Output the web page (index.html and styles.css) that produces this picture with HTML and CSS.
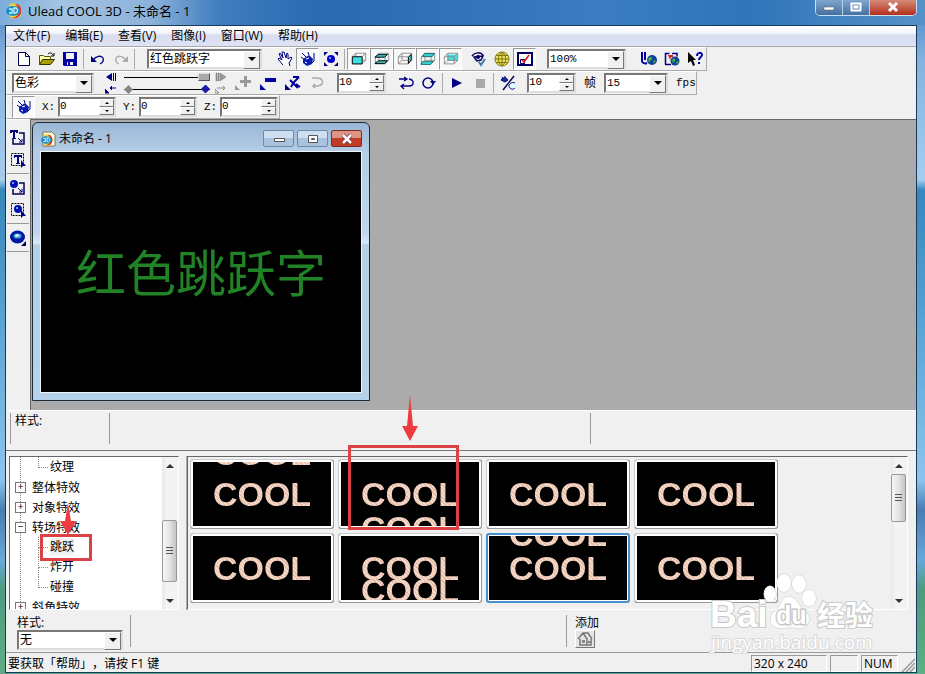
FILE: index.html
```html
<!DOCTYPE html>
<html lang="zh-CN">
<head>
  <meta charset="UTF-8" />
  <meta name="viewport" content="width=device-width, initial-scale=1.0" />
  <title>Ulead COOL 3D - 未命名 - 1</title>
  <link rel="stylesheet" href="styles.css">
</head>
<body>
  <svg class="defs" aria-hidden="true">
    <symbol id="logo" viewBox="0 0 16 16">
      <path d="M3 2l4-2 6 2 3 6-2 6-6 2-5-3z" fill="#f3d23c"/>
      <path d="M9 1c5 0 7 4 6 9-1 4-5 6-9 5 5-1 7-4 7-7s-2-5-4-7z" fill="#d8392b"/>
      <ellipse cx="7" cy="8" rx="7" ry="5" fill="#1c8fcb"/>
      <path d="M3 6h3v4H3M8 5v5h2c2-1 2-4 0-5z" fill="none" stroke="#c8f2fb" stroke-width="1.3"/>
    </symbol>
    <symbol id="pot" viewBox="0 0 16 16">
      <path d="M2 2l4 4M1 6l4 3M8 1l1 3M14 2v8l-2 2" fill="none" stroke="#000080"/>
      <path d="M3 8l6-4 4 4-1 5-5 2-4-3z" fill="#0a1fb0"/>
      <path d="M6 8l3-1M5 11l2 1" stroke="#fff"/>
    </symbol>
    <symbol id="cube" viewBox="0 0 18 16">
      <path d="M1.500 5.500l4-4h11v8l-4 4h-11zM1.500 5.500h11v8M12.500 5.500l4-4M5.500 1.500v8h11M5.500 9.500l-4 4" fill="none" stroke="#888"/>
    </symbol>
    <symbol id="corner" viewBox="0 0 16 16">
      <path d="M9 3h5v11H3V9" fill="none" stroke="#000050" stroke-width="1.500"/>
      <path d="M8 8l4 4M12 9v3H9" fill="none" stroke="#000080"/>
    </symbol>
    <symbol id="dashbox" viewBox="0 0 16 16">
      <path d="M1.500 1.500h12v12h-12z" fill="none" stroke="#000" stroke-dasharray="2 1"/>
      <path d="M11 8v8l2-2h3z" fill="#000080"/>
    </symbol>
  </svg>

  <header class="titlebar">
    <svg class="icon"><use href="#logo"/></svg>
    <h1>Ulead COOL 3D - 未命名 - 1</h1>
    <div class="window-buttons">
      <button aria-label="最小化"><svg class="icon" viewBox="0 0 16 16"><path d="M3 7h10v3H3z" fill="#fff" stroke="#555" stroke-width=".5"/></svg></button>
      <button aria-label="最大化"><svg class="icon" viewBox="0 0 16 16"><path d="M3.500 3.500h9v7h-9zM6.500 6.500h3v1h-3z" fill="none" stroke="#fff" stroke-width="2"/></svg></button>
      <button class="close" aria-label="关闭"><svg class="icon" viewBox="0 0 16 16"><path d="M4 3l8 8M12 3l-8 8" stroke="#fff" stroke-width="3"/></svg></button>
    </div>
  </header>

  <div class="app">
    <nav class="menubar">
      <a href="#">文件(F)</a>
      <a href="#">编辑(E)</a>
      <a href="#">查看(V)</a>
      <a href="#">图像(I)</a>
      <a href="#">窗口(W)</a>
      <a href="#">帮助(H)</a>
    </nav>

    <!-- 标准工具栏 -->
    <div class="toolbar">
      <div class="group">
        <button class="tool" aria-label="新建"><svg class="icon" viewBox="0 0 16 16"><path d="M2.500 1.500h7l4 4v9h-11zM9.500 1.500v4h4" fill="#fff" stroke="#000050"/></svg></button>
        <button class="tool" aria-label="打开"><svg class="icon" viewBox="0 0 16 16"><path d="M.5 13.500v-9h4l1 1h6v3" fill="#ffffa0" stroke="#555500"/><path d="M.5 13.500l3-5h12l-4 5z" fill="#a8a000" stroke="#333300"/><path d="M9 3c2-2 4-1 5 1M15 2v3h-3" fill="none" stroke="#000"/></svg></button>
        <button class="tool" aria-label="保存"><svg class="icon" viewBox="0 0 16 16"><path d="M1 1h14v14H2l-1-1z" fill="#0000a0"/><path d="M4 2h8v6H4zM5 11h6v3H5z" fill="#f0f0f0"/><path d="M6 11h2v3H6z" fill="#0000a0"/></svg></button>
      </div>
      <span class="sep"></span>
      <div class="group">
        <button class="tool" aria-label="撤消"><svg class="icon" viewBox="0 0 16 16"><path d="M3 9c3-4 8-5 10-2 1 3-1 5-3 6" fill="none" stroke="#000080" stroke-width="1.300"/><path d="M1 5v6h6z" fill="#000080"/></svg></button>
        <button class="tool" aria-label="重做"><svg class="icon" viewBox="0 0 16 16"><path d="M13 9C10 5 5 4 3 7c-1 3 1 5 3 6" fill="none" stroke="#aaa" stroke-width="1.300"/><path d="M15 5v6H9z" fill="#aaa"/></svg></button>
      </div>
      <span class="sep"></span>
      <div class="combo combo-object">
        <select aria-label="对象"><option>红色跳跃字</option></select>
      </div>
      <div class="group">
        <button class="tool" aria-label="移动"><svg class="icon" viewBox="0 0 16 16"><path d="M6 14L1 8l1-1 3 2-3-6 1-1 3 5-1-6 2 0 2 6 1-5 1 1v5l3-2 1 1-3 5 1 3" fill="#fff" stroke="#000080"/></svg></button>
        <button class="tool pressed" aria-label="旋转"><svg class="icon"><use href="#pot"/></svg></button>
        <button class="tool" aria-label="缩放"><svg class="icon" viewBox="0 0 16 16"><circle cx="8" cy="8" r="4" fill="#0000c8"/><path d="M1 1h4L1 5zM15 1v4l-4-4zM1 15v-4l4 4zM15 15h-4l4-4z" fill="#000080"/><circle cx="7" cy="7" r="1" fill="#9cf"/></svg></button>
      </div>
      <span class="sep"></span>
      <div class="group">
        <button class="tool pressed" aria-label="正面"><svg class="icon" viewBox="0 0 18 16"><use href="#cube"/><path d="M1.500 5.500h11v8h-11z" fill="#40e0e0" stroke="#000"/></svg></button>
        <button class="tool pressed" aria-label="边框"><svg class="icon" viewBox="0 0 18 16"><use href="#cube"/><path d="M1 6l4-3h10l-3 3zM1 13l4-3h10l-3 3z" fill="#40c0c0" stroke="#000"/></svg></button>
        <button class="tool pressed" aria-label="侧面"><svg class="icon" viewBox="0 0 18 16"><use href="#cube"/><path d="M13 6l3-3v6l-3 4z" fill="#40e0e0" stroke="#000"/></svg></button>
        <button class="tool pressed" aria-label="背面边框"><svg class="icon" viewBox="0 0 18 16"><use href="#cube"/><path d="M5 2h11l-2 3H3zM3 11h12l-3 3H1z" fill="#40e0e0" stroke="#066"/></svg></button>
        <button class="tool pressed" aria-label="背面"><svg class="icon" viewBox="0 0 18 16"><path d="M5 3h11v7H5z" fill="#40e0e0"/><use href="#cube"/></svg></button>
      </div>
      <span class="sep clear"></span>
      <div class="group">
        <button class="tool" aria-label="预览"><svg class="icon" viewBox="0 0 16 16"><path d="M1 5c3-4 8-4 11-1M3 6l3 4 4-1 2-4z" fill="none" stroke="#000060" stroke-width="1.500"/><circle cx="7" cy="6" r="2" fill="#000060"/><path d="M8 11l2 3 4-6" fill="none" stroke="#47a" stroke-width="2"/></svg></button>
        <button class="tool" aria-label="网络"><svg class="icon" viewBox="0 0 16 16"><circle cx="8" cy="8" r="7" fill="#e8e070"/><path d="M1 8h14M8 1v14M2 4.500h12M2 11.500h12M8 1C3 5 3 11 8 15M8 1c5 4 5 10 0 14" fill="none" stroke="#807800"/><circle cx="8" cy="8" r="7" fill="none" stroke="#807800"/></svg></button>
        <button class="tool pressed" aria-label="显示质量"><svg class="icon" viewBox="0 0 16 16"><path d="M1 2h14v12H1z" fill="#fff" stroke="#000060" stroke-width="2"/><path d="M3.500 8.500h4v4h-4z" fill="none" stroke="#000060"/><path d="M5 9l2 2 5-7" fill="none" stroke="#e01010" stroke-width="1.500"/></svg></button>
      </div>
      <div class="combo combo-zoom">
        <select aria-label="缩放比例"><option>100%</option></select>
      </div>
      <div class="group">
        <button class="tool" aria-label="Ulead 网站"><svg class="icon" viewBox="0 0 16 16"><path d="M1 1v9c0 2 3 3 5 2M4 1v8" fill="none" stroke="#0000a0" stroke-width="2"/><circle cx="11" cy="9" r="5" fill="#1040a0"/><path d="M7 8c2-3 5-2 4 0s-2 1-3 4zM12 10l3-1-2 4z" fill="#40b040"/></svg></button>
        <button class="tool" aria-label="网上资源"><svg class="icon" viewBox="0 0 16 16"><path d="M1.500 13.500v-11h4M8 2.500h5v3M1 13.500h6" fill="none" stroke="#000080" stroke-width="1.500"/><path d="M4 4h5v2H7l-1 3z" fill="#d02020"/><circle cx="11" cy="10" r="4.500" fill="#1040a0"/><path d="M8 9c2-3 4-1 3 1l-2 2zM12 11l3-1-2 4z" fill="#40b040"/></svg></button>
        <button class="tool" aria-label="帮助"><svg class="icon" viewBox="0 0 16 16"><path d="M1 1v11l3-2 2 5 2-1-2-5h3z" fill="#000"/><path d="M10 5c0-4 5-4 5-1 0 2-3 2-3 5M12 11v2" fill="none" stroke="#0000a0" stroke-width="2"/></svg></button>
      </div>
    </div>

    <!-- 动画工具栏 -->
    <div class="toolbar">
      <div class="combo combo-property">
        <select aria-label="属性"><option>色彩</option></select>
      </div>
      <div class="stack">
        <button aria-label="上一帧"><svg viewBox="0 0 12 10"><path d="M7 1v8L1 5zM8 1h1v8H8zM10 1h1v8h-1z" fill="#000080"/></svg></button>
        <button aria-label="上一关键帧"><svg viewBox="0 0 12 10"><path d="M0 5v4h4zM11 4H5M7 2L5 4l2 2" fill="#000080" stroke="#000080"/></svg></button>
      </div>
      <div class="sliders">
        <input class="slider" type="range" aria-label="时间" min="0" max="10" value="10">
        <div class="keyframes">
          <input class="slider" type="range" aria-label="关键帧" min="0" max="10" value="10">
          <span class="keyframe"></span>
        </div>
      </div>
      <div class="stack">
        <button aria-label="下一帧"><svg viewBox="0 0 12 10"><path d="M5 1v8l6-4zM1 1h1v8H1zM3 1h1v8H3z" fill="#999" stroke="#777" stroke-width=".5"/></svg></button>
        <button aria-label="下一关键帧"><svg viewBox="0 0 12 10"><path d="M0 5v4h4zM2 4h8M8 2l2 2-2 2" fill="none" stroke="#888"/></svg></button>
      </div>
      <button class="tool" aria-label="添加关键帧"><svg class="icon" viewBox="0 0 16 16"><path d="M0 10v5h5zM9 1h3v4h4v3h-4v4H9V8H5V5h4z" fill="#999"/></svg></button>
      <button class="tool" aria-label="删除关键帧"><svg class="icon" viewBox="0 0 16 16"><path d="M0 9v6h6zM5 3h11v4H5z" fill="#0000a0"/></svg></button>
      <button class="tool" aria-label="反转"><svg class="icon" viewBox="0 0 16 16"><path d="M0 9v6h6z" fill="#000080"/><path d="M8 2h6M5 5l8 8M14 2l-5 5-3 5M11 9l4 3" fill="none" stroke="#0000a0" stroke-width="2"/></svg></button>
      <button class="tool" aria-label="平滑动画路径"><svg class="icon" viewBox="0 0 16 16"><path d="M2 3h6c6 1 6 7 0 8H3M5 9l-2 2 2 2" fill="none" stroke="#aaa" stroke-width="1.500"/></svg></button>
      <div class="spin spin-frame">
        <input type="text" aria-label="当前帧" value="10">
        <div><button aria-label="增加"></button><button aria-label="减少"></button></div>
      </div>
      <div class="group">
        <button class="tool" aria-label="往返"><svg class="icon" viewBox="0 0 16 16"><path d="M1 4h7M6 2l3 2-3 2M11 4c6 1 5 7 0 7H3M6 9l-3 2 3 3" fill="none" stroke="#000080" stroke-width="1.300"/></svg></button>
        <button class="tool" aria-label="循环"><svg class="icon" viewBox="0 0 16 16"><circle cx="7" cy="8" r="5" fill="none" stroke="#000080" stroke-width="1.500"/><path d="M9 6h6l-3 4z" fill="#000080"/></svg></button>
      </div>
      <span class="sep"></span>
      <div class="group">
        <button class="tool" aria-label="播放"><svg class="icon" viewBox="0 0 16 16"><path d="M3 3v10l10-5z" fill="#000080"/></svg></button>
        <button class="tool" aria-label="停止"><svg class="icon" viewBox="0 0 16 16"><path d="M4 4h9v9H4z" fill="#a8a8a8"/></svg></button>
      </div>
      <span class="sep"></span>
      <button class="tool" aria-label="显示/隐藏"><svg class="icon" viewBox="0 0 16 16"><path d="M1 5c2-3 5-3 7 0L5 7zM2 2l1 2M5 1v2" fill="#1430a0" stroke="#000060"/><path d="M14 1L3 15" stroke="#000060" stroke-width="1.500"/><path d="M15 8c-4-2-8 3-5 5 2 2 4 1 5 0" fill="#dff" stroke="#000080"/></svg></button>
      <div class="spin spin-frame">
        <input type="text" id="frames" value="10">
        <div><button aria-label="增加"></button><button aria-label="减少"></button></div>
      </div>
      <label for="frames">帧</label>
      <div class="combo combo-fps">
        <select id="fps"><option>15</option></select>
      </div>
      <label class="latin" for="fps">fps</label>
    </div>

    <!-- 位置工具栏 -->
    <div class="toolbar position">
      <button class="tool pressed" aria-label="旋转对象"><svg class="icon"><use href="#pot"/></svg></button>
      <label class="latin" for="pos-x">X:</label>
      <div class="spin spin-axis">
        <input type="text" id="pos-x" value="0">
        <div><button aria-label="增加 X"></button><button aria-label="减少 X"></button></div>
      </div>
      <label class="latin" for="pos-y">Y:</label>
      <div class="spin spin-axis">
        <input type="text" id="pos-y" value="0">
        <div><button aria-label="增加 Y"></button><button aria-label="减少 Y"></button></div>
      </div>
      <label class="latin" for="pos-z">Z:</label>
      <div class="spin spin-axis">
        <input type="text" id="pos-z" value="0">
        <div><button aria-label="增加 Z"></button><button aria-label="减少 Z"></button></div>
      </div>
    </div>

    <main class="workspace">
      <aside class="object-tools">
        <button class="tool" aria-label="插入文字"><svg class="icon" viewBox="0 0 16 16"><use href="#corner"/><path d="M0 0h8v3H6V2H5v6h1v1H2V8h1V2H2v1H0z" fill="#000080"/></svg></button>
        <button class="tool" aria-label="编辑文字"><svg class="icon" viewBox="0 0 16 16"><use href="#dashbox"/><path d="M4 3h8v3h-1V5H9v6h1v1H6v-1h1V5H5v1H4z" fill="#000080"/></svg></button>
        <hr>
        <button class="tool" aria-label="插入图形"><svg class="icon" viewBox="0 0 16 16"><use href="#corner"/><circle cx="4" cy="4" r="4" fill="#0010b0"/><circle cx="3" cy="3" r="1" fill="#9cf"/></svg></button>
        <button class="tool" aria-label="编辑图形"><svg class="icon" viewBox="0 0 16 16"><use href="#dashbox"/><circle cx="8" cy="7" r="4" fill="#0010b0"/><circle cx="7" cy="6" r="1" fill="#9cf"/></svg></button>
        <hr>
        <button class="tool" aria-label="插入几何对象"><svg class="icon" viewBox="0 0 16 16"><ellipse cx="7.500" cy="7" rx="7.500" ry="6.500" fill="#0018a0"/><ellipse cx="7.500" cy="6" rx="4" ry="2.500" fill="#40b0d8"/><path d="M5 5l3-1 1 2-3 1z" fill="#fff"/><path d="M16 11v5h-5z" fill="#000060"/></svg></button>
        <hr>
      </aside>
      <section class="desktop">
        <article class="document">
          <header class="document-title">
            <svg class="icon" viewBox="0 0 16 16"><path d="M3 1h9l3 3v11H3z" fill="#fffbe0" stroke="#775"/><use href="#logo" y="3" width="14" height="12"/></svg>
            <h2>未命名 - 1</h2>
            <button aria-label="最小化文档"><svg class="icon" viewBox="0 0 16 16"><path d="M3.500 7.500h10v3h-10z" fill="#fff" stroke="#555"/></svg></button>
            <button aria-label="最大化文档"><svg class="icon" viewBox="0 0 16 16"><path d="M3.500 4.500h9v7h-9zM6.500 7.500h3v1h-3z" fill="#fff" stroke="#555"/></svg></button>
            <button class="close" aria-label="关闭文档"><svg class="icon" viewBox="0 0 16 16"><path d="M4 4l8 8M12 4l-8 8" stroke="#733" stroke-width="4"/><path d="M4 4l8 8M12 4l-8 8" stroke="#fff" stroke-width="2.500"/></svg></button>
          </header>
          <div class="canvas">红色跳跃字</div>
        </article>
      </section>
    </main>

    <section class="attributes">
      <div class="attribute-name">样式:</div>
      <div class="attribute-main"></div>
      <div class="attribute-rest"></div>
    </section>

    <section class="browser">
      <div class="tree">
        <ul class="branches">
          <li class="leaf last">纹理</li>
          <li class="node">整体特效</li>
          <li class="node">对象特效</li>
          <li class="node open">转场特效</li>
          <li class="leaf selected">
            <span>跳跃</span>
            <i class="mark mark-tree"></i>
            <svg class="arrow arrow-tree" viewBox="0 0 16 32"><path d="M8 0l3 18h5L8 32 0 18h5z" fill="#ee3b3f"/></svg>
          </li>
          <li class="leaf">炸开</li>
          <li class="leaf last">碰撞</li>
          <li class="node">斜角特效</li>
        </ul>
        <div class="scrollbar scrollbar-tree"><b class="up"></b><div class="track"><i></i></div><b class="down"></b></div>
      </div>
      <div class="gallery">
        <ul class="thumbs">
          <li><button class="thumb"><span>COOL</span><span class="copy high">COOL</span></button></li>
          <li>
            <button class="thumb"><span>COOL</span><span class="copy low">COOL</span></button>
            <i class="mark mark-thumb"></i>
            <svg class="arrow arrow-thumb" viewBox="0 0 16 46"><path d="M8 0l3 31h5L8 46 0 31h5z" fill="#ee3b3f"/></svg>
          </li>
          <li><button class="thumb"><span>COOL</span></button></li>
          <li><button class="thumb"><span>COOL</span></button></li>
          <li><button class="thumb"><span>COOL</span></button></li>
          <li><button class="thumb"><span>COOL</span><span class="copy near">COOL</span></button></li>
          <li><button class="thumb active"><span>COOL</span><span class="copy above">COOL</span></button></li>
          <li><button class="thumb"><span>COOL</span></button></li>
        </ul>
        <div class="scrollbar scrollbar-gallery"><b class="up"></b><div class="track"><i></i></div><b class="down"></b></div>
      </div>
    </section>

    <section class="options">
      <div class="option-style">
        <label for="style">样式:</label>
        <div class="combo combo-style">
          <select id="style"><option>无</option></select>
        </div>
      </div>
      <div class="option-add">
        <label for="add-btn">添加</label>
        <button id="add-btn"><svg class="icon" viewBox="0 0 16 16"><path d="M1 8l5-6h5l4 6M3 8v6h11V8M6 2l4 6v6" fill="none" stroke="#777" stroke-width="1.500"/><path d="M5 9h3v3H5zM11 10h4v2h-4z" fill="#888"/></svg></button>
      </div>
      <svg class="watermark" viewBox="0 0 170 84" aria-hidden="true">
        <g class="paw">
          <ellipse cx="63" cy="24" rx="6" ry="8"/>
          <ellipse cx="77" cy="13" rx="7" ry="9"/>
          <ellipse cx="92" cy="14" rx="7" ry="9"/>
          <ellipse cx="102" cy="28" rx="7" ry="8"/>
          <path d="M82 27c8 0 9 8 15 13 9 7 5 18-4 18-6 0-8-1-16 0-13 2-18-9-9-17 7-6 6-14 14-14z"/>
        </g>
        <text class="brand" x="3" y="57">Bai</text>
        <text class="du" x="69" y="54">du</text>
        <text class="cjk" x="110" y="56">经验</text>
        <text class="url" x="4" y="79">jingyan.baidu.com</text>
      </svg>
    </section>

    <footer class="statusbar">
      <p>要获取「帮助」，请按 F1 键</p>
      <span class="cell cell-size">320 x 240</span>
      <span class="cell cell-empty"></span>
      <span class="cell cell-num">NUM</span>
      <svg class="grip" viewBox="0 0 14 14"><path d="M1 14L14 1M5 14l9-9M9 14l5-5" stroke="#999" stroke-width="1.500"/></svg>
    </footer>
  </div>
</body>
</html>
```

FILE: styles.css
```css
* {
  box-sizing: border-box;
}

body {
  margin: 0;
  height: 100vh;
  display: flex;
  flex-direction: column;
  padding: 0 8px 1px 5px;
  overflow: hidden;
  font-family: "Open Sans", "Noto Sans CJK SC", sans-serif;
  font-size: 12px;
  line-height: 16px;
  text-spacing-trim: space-all;
  color: #000;
  background: linear-gradient(#4a86c4 0, #86b2de 60px, #a6cdec 180px, #3687bb 190px, #5aa3d2 320px, #8cc4ec 480px, #4a7cb0 510px, #6aa8d8 560px, #4f9a80 590px, #5fae86 100%);
}

h1, h2, p, ul {
  margin: 0;
  padding: 0;
  font-weight: normal;
  list-style: none;
}

button {
  padding: 0;
  border: 0;
  background: none;
  font: inherit;
}

input, select {
  font: inherit;
  color: inherit;
}

.defs {
  position: absolute;
  width: 0;
  height: 0;
}

.icon {
  display: block;
  width: 16px;
  height: 16px;
}

/* 标题栏 */
.titlebar {
  display: flex;
  align-items: center;
  gap: 6px;
  height: 25px;
  margin: 0 -8px 0 -5px;
  padding: 0 8px 4px 6px;
  background: linear-gradient(90deg, #7eaedb, #a4c3e2 60px, #8db2da 150px, #3f7dbf 220px, #2b69b1 320px, #3b7dc0 600px, #2f75ba 750px, #5791c8);
}

.titlebar h1 {
  flex: 1;
  font-size: 13px;
}

.window-buttons {
  display: flex;
  align-self: flex-start;
  height: 16px;
  border: 1px solid #c8e0f4;
  border-top: 0;
  border-radius: 0 0 5px 5px;
  overflow: hidden;
}

.window-buttons button {
  display: grid;
  place-items: center;
  width: 27px;
  border-right: 1px solid #b4cfe8;
  background: linear-gradient(#7ea6cf, #456f9f);
}

.window-buttons .close {
  width: 46px;
  border: 0;
  background: linear-gradient(#d48a78, #b4301c);
}

.app {
  flex: 1;
  display: flex;
  flex-direction: column;
  min-height: 0;
  border: 1px solid #17395c;
  background: #f0f0f0;
}

.menubar {
  display: flex;
  gap: 15px;
  height: 21px;
  padding: 2px 7px;
  border-bottom: 1px solid #aaa;
  background: linear-gradient(#fff, #f4f5fb 35%, #d8def0 45%, #dde3f4);
}

.menubar a {
  color: #000;
  text-decoration: none;
}

/* 工具栏 */
.toolbar {
  display: flex;
  align-items: center;
  align-self: flex-start;
  gap: 2px;
  height: 24px;
  padding-left: 5px;
  border: 1px solid #aaa;
  border-top-color: #fff;
  border-left-color: #fff;
}

.group {
  display: flex;
}

.tool {
  display: grid;
  place-items: center;
  width: 23px;
  height: 22px;
}

.tool.pressed {
  border: 1px solid;
  border-color: #999 #fff #fff #999;
  background: #f8f8f8;
}

.sep {
  width: 1px;
  height: 20px;
  background: #aaa;
}

.sep.clear {
  background: none;
}

.combo {
  position: relative;
  height: 20px;
  margin: 0 9px;
  border: 2px solid;
  border-color: #777 #ddd #ddd #777;
  background: #fff;
}

.combo select {
  display: block;
  width: 100%;
  height: 16px;
  padding: 0 1px;
  border: 0;
  background: none;
  appearance: none;
  line-height: 14px;
}

.combo::before {
  content: "";
  position: absolute;
  top: 0;
  right: 0;
  width: 15px;
  height: 16px;
  border: 1px solid;
  border-color: #fff #777 #777 #fff;
  background: #f0f0f0;
  pointer-events: none;
}

.combo::after {
  content: "";
  position: absolute;
  top: 6px;
  right: 4px;
  border: 4px solid transparent;
  border-top-color: #000;
  border-bottom: 0;
  pointer-events: none;
}

.combo-object {
  width: 115px;
  margin: 0 9px 0 10px;
}

.combo-zoom {
  width: 79px;
}

.combo-property {
  width: 82px;
  margin-left: 0;
}

.combo-fps {
  width: 64px;
  margin: 0 6px;
}

.combo-zoom select, .combo-fps select, .spin input, .latin {
  font-family: "Liberation Mono", monospace;
  font-size: 11px;
}

.stack {
  display: grid;
  gap: 2px;
  width: 14px;
}

.stack button, .stack svg {
  display: block;
  width: 12px;
  height: 10px;
}

.sliders {
  display: grid;
  gap: 2px;
  width: 86px;
  margin: 0 3px;
}

.slider {
  display: block;
  width: 100%;
  height: 10px;
  margin: 0;
  appearance: none;
  background: linear-gradient(#000, #000) center / 100% 1px no-repeat;
}

.slider::-webkit-slider-thumb {
  appearance: none;
  width: 12px;
  height: 8px;
  border: 1px solid;
  border-color: #ddd #555 #555 #ddd;
  background: #aaa;
}

.keyframes {
  position: relative;
}

.keyframes .slider::-webkit-slider-thumb, .keyframe {
  width: 9px;
  height: 9px;
  border: 0;
  background: #1a1aa8;
  clip-path: polygon(50% 0, 100% 50%, 50% 100%, 0 50%);
}

.keyframe {
  position: absolute;
  top: 1px;
  left: 0;
  background: #888;
}

.spin {
  display: flex;
  height: 20px;
  border: 2px solid;
  border-color: #777 #ddd #ddd #777;
  background: #fff;
}

.spin input {
  flex: 1;
  min-width: 0;
  padding: 0 0 3px;
  border: 0;
  background: none;
}

.spin div {
  display: grid;
  width: 15px;
}

.spin button {
  display: grid;
  place-items: center;
  height: 8px;
  border: 1px solid;
  border-color: #fff #777 #777 #fff;
  background: #f0f0f0;
}

.spin button::after {
  content: "";
  border: 2px solid transparent;
  border-top: 0;
  border-bottom-color: #000;
}

.spin button:last-child::after {
  border-top: 2px solid #000;
  border-bottom: 0;
}

.spin-frame {
  width: 49px;
  margin: 0 6px;
}

.spin-axis {
  width: 58px;
  margin-right: 5px;
}

.spin-axis:last-child {
  margin-right: 1px;
}

.position .latin {
  width: 14px;
}

.position .tool {
  margin-right: 5px;
}

/* 工作区 */
.workspace {
  flex: 1;
  display: flex;
  min-height: 0;
}

.object-tools {
  width: 24px;
  padding-top: 7px;
  border-top: 1px solid #fff;
}

.object-tools hr {
  height: 1px;
  margin: 2px 1px 3px;
  border: 0;
  background: #999;
}

.desktop {
  flex: 1;
  padding: 2px 1px;
  border-top: 1px solid #666;
  border-left: 1px solid #666;
  background: #ababab;
  overflow: hidden;
}

.document {
  width: fit-content;
  padding: 0 7px 7px;
  border: 1px solid #1e2c38;
  border-radius: 6px 6px 0 0;
  background: linear-gradient(#9ab8d6, #b6cde6 30px, #bfd6ee 110px, #d8e8f6 120px, #b4d0e8 122px, #b4d2ea);
}

.document-title {
  display: flex;
  align-items: center;
  gap: 3px;
  height: 28px;
  padding-top: 3px;
}

.document-title h2 {
  flex: 1;
  font-size: 12px;
}

.document-title button {
  display: grid;
  place-items: center;
  width: 31px;
  height: 17px;
  border: 1px solid #6f8aa8;
  border-radius: 2px;
  background: linear-gradient(#cddff0 50%, #a9c3de 50%);
}

.document-title .close {
  border-color: #7c2c20;
  background: linear-gradient(#dd9484 50%, #c03c26 50%);
}

.canvas {
  box-sizing: content-box;
  width: 320px;
  height: 240px;
  border: 1px solid #eef6fc;
  background: #000;
  color: #228226;
  font-family: "KaiTi", "AR PL UKai CN", "Noto Sans CJK SC", sans-serif;
  font-size: 50px;
  font-weight: 400;
  line-height: 236px;
  text-align: center;
}

/* 属性面板 */
.attributes {
  display: flex;
  height: 41px;
  padding: 2px 5px 6px 4px;
  border-top: 1px solid #fff;
  border-bottom: 1px solid #777;
}

.attributes div {
  border-left: 1px solid #999;
}

.attributes .attribute-name {
  width: 99px;
  padding-left: 4px;
}

.attributes .attribute-main {
  flex: 3 0 0;
}

.attributes .attribute-rest {
  flex: 2 0 0;
}

/* 特效浏览 */
.browser {
  display: flex;
  gap: 8px;
  height: 154px;
  margin-top: 5px;
  padding: 0 8px 0 3px;
}

.tree {
  display: flex;
  width: 170px;
  border: 1px solid;
  border-color: #666 #fff #fff #666;
  background: #fff;
}

.branches {
  flex: 1;
  overflow: hidden;
  background: repeating-linear-gradient(#888 0 1px, transparent 1px 2px) 10px 0 / 1px 100% no-repeat;
}

.branches li {
  position: relative;
  height: 20px;
  line-height: 19px;
}

.node {
  display: flex;
  align-items: center;
  gap: 6px;
  padding-left: 5px;
}

.node::before {
  content: "+";
  width: 9px;
  height: 9px;
  border: 1px solid #777;
  background: #fff;
  font-size: 10px;
  line-height: 7px;
  text-align: center;
}

.node.open::before {
  content: "−";
}

.leaf {
  padding-left: 40px;
}

.leaf::before {
  content: "";
  position: absolute;
  top: 0;
  left: 28px;
  width: 9px;
  height: 10px;
  border-left: 1px dotted #888;
  border-bottom: 1px dotted #888;
}

.leaf:not(.last)::after {
  content: "";
  position: absolute;
  top: 10px;
  left: 28px;
  height: 10px;
  border-left: 1px dotted #888;
}

.selected span {
  background: #f0f0f0;
}

.mark {
  position: absolute;
  border: 3px solid #dc4146;
}

.mark-tree {
  top: -3px;
  left: 30px;
  width: 52px;
  height: 27px;
}

.arrow {
  position: absolute;
}

.arrow-tree {
  top: -34px;
  left: 50px;
  width: 16px;
  height: 32px;
}

.branches .selected {
  z-index: 1;
}

.scrollbar {
  display: flex;
  flex-direction: column;
  width: 16px;
  background: linear-gradient(90deg, #e8e8e8, #f4f4f4 30%, #f2f2f2);
}

.scrollbar b {
  display: grid;
  place-items: center;
  height: 17px;
}

.scrollbar b::after {
  content: "";
  border: 4px solid transparent;
}

.scrollbar .up::after {
  border-top: 0;
  border-bottom-color: #333;
}

.scrollbar .down::after {
  border-bottom: 0;
  border-top-color: #333;
}

.track {
  flex: 1;
  display: flex;
  flex-direction: column;
}

.track i {
  display: grid;
  place-items: center;
  width: 15px;
  height: 48px;
  border: 1px solid #999;
  border-radius: 2px;
  background: linear-gradient(90deg, #f6f6f6, #e4e4e6 50%, #c4c4c8);
}

.track i::after {
  content: "";
  width: 7px;
  height: 8px;
  background: repeating-linear-gradient(#555 0 1px, transparent 1px 3px);
}

.scrollbar-tree .track {
  justify-content: flex-end;
}

.scrollbar-tree .track i {
  height: 62px;
  margin-bottom: 10px;
}

.gallery {
  flex: 1;
  display: flex;
  border: 1px solid;
  border-color: #666 #fff #fff #666;
  box-shadow: -1px 0 #aaa;
}

.thumbs {
  flex: 1;
  display: grid;
  grid-template-columns: repeat(auto-fill, 144px);
  align-content: start;
  gap: 4px;
  padding: 2px;
}

.thumbs li {
  position: relative;
}

.thumb {
  position: relative;
  display: grid;
  place-items: center;
  width: 144px;
  height: 70px;
  border: 1px solid;
  border-color: #ccc #999 #999 #ccc;
  border-radius: 3px;
  background: #000;
  overflow: hidden;
}

.thumb.active {
  border: 2px solid #4a90cc;
}

/* 白边盖在文字上面 */
.thumb::after {
  content: "";
  position: absolute;
  inset: 0;
  border: 2px solid #fff;
}

.thumb.active::after {
  border-width: 1px;
}

.thumb span {
  font: bold 34px/64px "Liberation Sans", sans-serif;
  color: transparent;
  background: repeating-linear-gradient(45deg, #f6d8c8 0 2px, #e6bda6 2px 3px);
  background-clip: text;
}

.thumb .copy {
  position: absolute;
}

.thumb .high {
  top: -39px;
}

.thumb .low {
  top: 36px;
}

.thumb .near {
  top: 24px;
}

.thumb .above {
  top: -33px;
}

.mark-thumb {
  top: -14px;
  left: 10px;
  width: 111px;
  height: 85px;
  pointer-events: none;
}

.arrow-thumb {
  top: -64px;
  left: 64px;
  width: 16px;
  height: 46px;
}

/* 底部选项 */
.options {
  position: relative;
  display: flex;
  justify-content: space-between;
  height: 43px;
  padding: 5px 5px 5px 8px;
  border-bottom: 1px solid #999;
}

.options label {
  display: block;
  height: 15px;
  line-height: 15px;
}

.option-style {
  padding: 0 7px 0 3px;
  border-right: 1px solid #999;
}

.combo-style {
  width: 106px;
  margin: 0;
}

.option-add {
  width: 345px;
  padding-left: 8px;
  border-left: 1px solid #999;
}

.option-add button {
  display: grid;
  place-items: center;
  width: 20px;
  height: 18px;
  border: 1px solid;
  border-color: #fff #777 #777 #fff;
  background: #e4e4e4;
}

.watermark {
  position: absolute;
  right: 39px;
  bottom: -2px;
  width: 170px;
  height: 84px;
  overflow: visible;
  fill: #fff;
  stroke: #c8c8c8;
  paint-order: stroke;
}

.brand {
  font: bold 37px "Liberation Sans", sans-serif;
  stroke-width: 2px;
}

.du {
  font: bold 25px "Liberation Sans", sans-serif;
  stroke-width: 3px;
}

.cjk {
  font: bold 28px "Noto Sans CJK SC", sans-serif;
  stroke-width: 2px;
}

.url {
  font: 19px "Open Sans", sans-serif;
  stroke: #d8d8d8;
  stroke-width: 2px;
}

/* 状态栏 */
.statusbar {
  display: flex;
  gap: 3px;
  height: 19px;
  padding: 2px 1px 0 2px;
}

.statusbar p {
  flex: 1;
  line-height: 18px;
}

.cell {
  padding: 0 2px;
  border: 1px solid;
  border-color: #999 #fff #fff #999;
  line-height: 15px;
}

.cell-size {
  width: 76px;
}

.cell-empty {
  width: 28px;
}

.cell-num {
  width: 37px;
}

.grip {
  width: 14px;
  height: 14px;
  margin-top: 3px;
}
```
